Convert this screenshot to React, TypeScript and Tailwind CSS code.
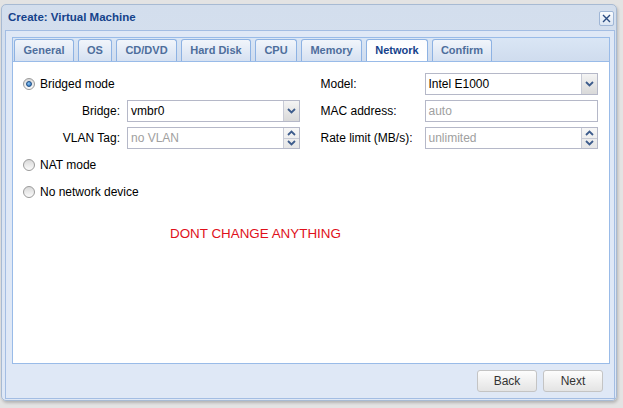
import React from "react";

const tabs = [
  { label: "General", w: "w-[60px]" },
  { label: "OS", w: "w-[34px]" },
  { label: "CD/DVD", w: "w-[61px]" },
  { label: "Hard Disk", w: "w-[70px]" },
  { label: "CPU", w: "w-[42px]" },
  { label: "Memory", w: "w-[61px]" },
  { label: "Network", w: "w-[62px]", active: true },
  { label: "Confirm", w: "w-[60px]" },
];

function Chevron({ up }: { up?: boolean }) {
  return (
    <svg width="9" height="6" viewBox="0 0 9 6">
      <path
        d={up ? "M1 5 L4.5 1.5 L8 5" : "M1 1 L4.5 4.5 L8 1"}
        fill="none"
        stroke="#3d5c8c"
        strokeWidth="1.8"
      />
    </svg>
  );
}

function Radio({ checked }: { checked?: boolean }) {
  return (
    <span className="flex h-[12px] w-[12px] items-center justify-center rounded-full border border-[#9a9a9a] bg-gradient-to-b from-[#d9d9d9] to-[#fbfbfb]">
      {checked && (
        <span className="h-[6px] w-[6px] rounded-full border border-[#1d4d85] bg-[radial-gradient(circle_at_40%_35%,#8cc4f2,#1f66b3)]" />
      )}
    </span>
  );
}

function RadioRow({ label, checked }: { label: string; checked?: boolean }) {
  return (
    <div className="flex h-[22px] items-center gap-[5px] pl-px">
      <Radio checked={checked} />
      <span className="text-[12px] text-black">{label}</span>
    </div>
  );
}

function Field({
  value,
  muted,
  trigger,
}: {
  value: string;
  muted?: boolean;
  trigger?: "combo" | "spin";
}) {
  return (
    <div className="flex h-[22px] flex-1 border border-[#b5b8c8] bg-white">
      <div
        className={
          "flex flex-1 items-center pl-[3px] text-[12px] " +
          (muted ? "text-[#a0a0a0]" : "text-black")
        }
      >
        {value}
      </div>
      {trigger === "combo" && (
        <div className="flex w-[16px] items-center justify-center border-l border-[#c8cbd6] bg-gradient-to-b from-[#f4f4f4] to-[#d9d9d9]">
          <Chevron />
        </div>
      )}
      {trigger === "spin" && (
        <div className="flex w-[16px] flex-col border-l border-[#c8cbd6] bg-gradient-to-b from-[#f7f7f7] to-[#e6e6e6]">
          <div className="flex flex-1 items-center justify-center border-b border-[#c8cbd6]">
            <Chevron up />
          </div>
          <div className="flex flex-1 items-center justify-center">
            <Chevron />
          </div>
        </div>
      )}
    </div>
  );
}

function LeftRow({ label, children }: { label: string; children: React.ReactNode }) {
  return (
    <div className="flex h-[22px] items-center">
      <span className="w-[99px] pr-[1px] text-right text-[12px] text-black">{label}</span>
      <div className="ml-[6px] flex flex-1">{children}</div>
    </div>
  );
}

function RightRow({ label, children }: { label: string; children: React.ReactNode }) {
  return (
    <div className="flex h-[22px] items-center">
      <span className="w-[104px] text-[12px] text-black">{label}</span>
      <div className="flex flex-1">{children}</div>
    </div>
  );
}

function Button({ label }: { label: string }) {
  return (
    <button className="flex h-[22px] w-[60px] items-center justify-center rounded-[3px] border border-[#c4c4c4] bg-gradient-to-b from-[#fdfdfd] to-[#e4e4e4] text-[12px] text-[#333]">
      {label}
    </button>
  );
}

export default function App() {
  return (
    <div className="h-[408px] w-[623px] bg-[#e3e3e3] pl-px pt-[4px] font-['Liberation_Sans',Arial,sans-serif]">
      <div className="flex h-[397px] w-[616px] flex-col rounded-[5px] border border-[#a7bad3] bg-gradient-to-b from-[#d3deed] to-[#dfe8f6] shadow-[1px_2px_3px_rgba(0,0,0,0.2)]">
        {/* title bar */}
        <div className="flex h-[25px] items-center justify-between pl-[6px] pr-[2px] pt-[1px]">
          <span className="text-[11.5px] font-bold text-[#15428b]">Create: Virtual Machine</span>
          <span className="flex h-[15px] w-[15px] items-center justify-center rounded-[2px] border border-[#9fb6d6] bg-gradient-to-b from-[#fafcfe] to-[#dbe5f3]">
            <svg width="9" height="9" viewBox="0 0 9 9">
              <path d="M1 1 L8 8 M8 1 L1 8" stroke="#2a4b80" strokeWidth="1.4" />
            </svg>
          </span>
        </div>

        {/* body frame */}
        <div className="mb-[1px] ml-[3px] mr-px flex flex-1 flex-col border border-[#a3bde3] bg-[#dfe8f6] pl-[6px] pr-[4px] pt-[6px]">
          {/* tab panel */}
          <div className="flex h-[327px] flex-col">
            <div className="flex h-[24px] items-end gap-[4px] border border-b-0 border-[#99bbe8] bg-gradient-to-b from-[#dae6f5] to-[#cfdcee] pl-[1px]">
              {tabs.map((t) => (
                <div
                  key={t.label}
                  className={
                    "flex h-[22px] items-center justify-center rounded-t-[3px] border border-[#8db2e3] text-[11px] font-bold " +
                    t.w +
                    " " +
                    (t.active
                      ? "-mb-px h-[23px] border-b-white bg-gradient-to-b from-[#fbfcfe] to-[#ffffff] text-[#15428b]"
                      : "border-b-0 bg-gradient-to-b from-[#f1f5fb] to-[#d6e1f1] text-[#4e6e9c]")
                  }
                >
                  {t.label}
                </div>
              ))}
            </div>
            <div className="flex flex-1 flex-col border border-[#99bbe8] bg-white pl-[9px] pr-[11px] pt-[11px]">
              <div className="grid grid-cols-2 gap-x-[21px]">
                <div className="flex flex-col gap-[5px]">
                  <RadioRow label="Bridged mode" checked />
                  <LeftRow label="Bridge:">
                    <Field value="vmbr0" trigger="combo" />
                  </LeftRow>
                  <LeftRow label="VLAN Tag:">
                    <Field value="no VLAN" muted trigger="spin" />
                  </LeftRow>
                  <RadioRow label="NAT mode" />
                  <RadioRow label="No network device" />
                </div>
                <div className="flex flex-col gap-[5px]">
                  <RightRow label="Model:">
                    <Field value="Intel E1000" trigger="combo" />
                  </RightRow>
                  <RightRow label="MAC address:">
                    <Field value="auto" muted />
                  </RightRow>
                  <RightRow label="Rate limit (MB/s):">
                    <Field value="unlimited" muted trigger="spin" />
                  </RightRow>
                </div>
              </div>
              <div className="mt-[21px] pl-[148px] text-[13.4px] text-[#e0101a]">DONT CHANGE ANYTHING</div>
            </div>
          </div>

          {/* toolbar */}
          <div className="flex flex-1 items-center justify-end gap-[6px] pr-[7px]">
            <Button label="Back" />
            <Button label="Next" />
          </div>
        </div>
      </div>
    </div>
  );
}
